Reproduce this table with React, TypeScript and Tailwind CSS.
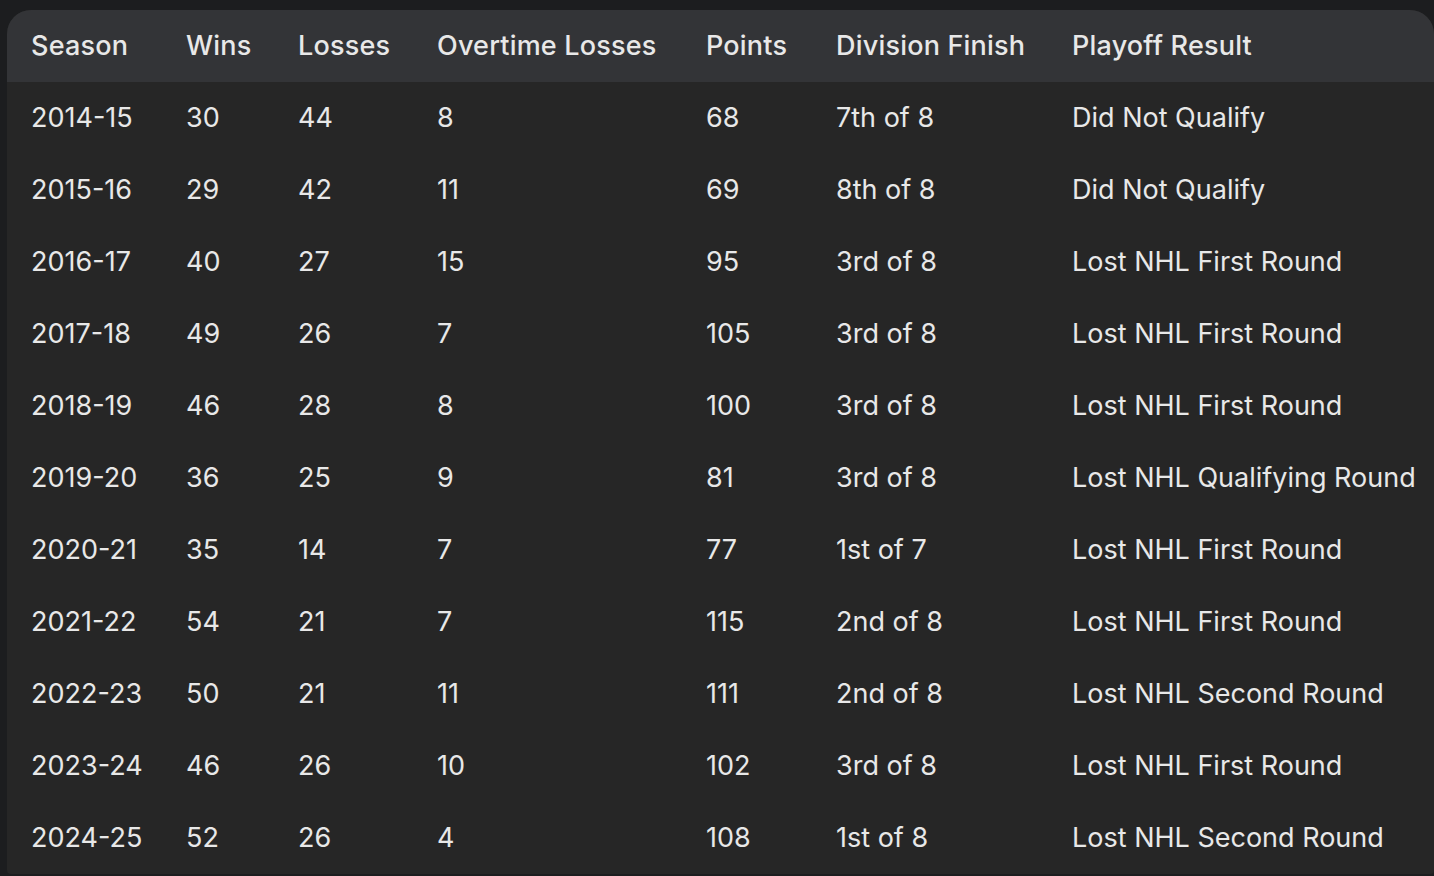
import React from 'react';

type Season = {
  season: string;
  wins: number;
  losses: number;
  otl: number;
  points: number;
  division: string;
  playoff: string;
};

const seasons: Season[] = [
  { season: '2014-15', wins: 30, losses: 44, otl: 8, points: 68, division: '7th of 8', playoff: 'Did Not Qualify' },
  { season: '2015-16', wins: 29, losses: 42, otl: 11, points: 69, division: '8th of 8', playoff: 'Did Not Qualify' },
  { season: '2016-17', wins: 40, losses: 27, otl: 15, points: 95, division: '3rd of 8', playoff: 'Lost NHL First Round' },
  { season: '2017-18', wins: 49, losses: 26, otl: 7, points: 105, division: '3rd of 8', playoff: 'Lost NHL First Round' },
  { season: '2018-19', wins: 46, losses: 28, otl: 8, points: 100, division: '3rd of 8', playoff: 'Lost NHL First Round' },
  { season: '2019-20', wins: 36, losses: 25, otl: 9, points: 81, division: '3rd of 8', playoff: 'Lost NHL Qualifying Round' },
  { season: '2020-21', wins: 35, losses: 14, otl: 7, points: 77, division: '1st of 7', playoff: 'Lost NHL First Round' },
  { season: '2021-22', wins: 54, losses: 21, otl: 7, points: 115, division: '2nd of 8', playoff: 'Lost NHL First Round' },
  { season: '2022-23', wins: 50, losses: 21, otl: 11, points: 111, division: '2nd of 8', playoff: 'Lost NHL Second Round' },
  { season: '2023-24', wins: 46, losses: 26, otl: 10, points: 102, division: '3rd of 8', playoff: 'Lost NHL First Round' },
  { season: '2024-25', wins: 52, losses: 26, otl: 4, points: 108, division: '1st of 8', playoff: 'Lost NHL Second Round' },
];

const headers = ['Season', 'Wins', 'Losses', 'Overtime Losses', 'Points', 'Division Finish', 'Playoff Result'];

const cols = 'grid grid-cols-[155px_112px_139px_269px_130px_236px_1fr]';

export default function App() {
  return (
    <div
      className="min-h-[876px] bg-[#1c1d1f] pl-[7px] pt-[10px] text-[#e8e8e8]"
      style={{ fontFamily: 'Inter, "Noto Sans", sans-serif' }}
    >
      <div className="overflow-hidden rounded-t-[24px] rounded-b-[4px] bg-[#262626]">
        <div className={`${cols} h-[72px] items-center bg-[#333437] text-[27px] font-medium tracking-[0.2px]`}>
          {headers.map((h) => (
            <div key={h} className="whitespace-nowrap pl-6">
              {h}
            </div>
          ))}
        </div>
        {seasons.map((s) => (
          <div key={s.season} className={`${cols} h-[72px] items-center text-[27px]`}>
            <div className="pl-6">{s.season}</div>
            <div className="pl-6">{s.wins}</div>
            <div className="pl-6">{s.losses}</div>
            <div className="pl-6">{s.otl}</div>
            <div className="pl-6">{s.points}</div>
            <div className="pl-6">{s.division}</div>
            <div className="whitespace-nowrap pl-6">{s.playoff}</div>
          </div>
        ))}
      </div>
    </div>
  );
}
